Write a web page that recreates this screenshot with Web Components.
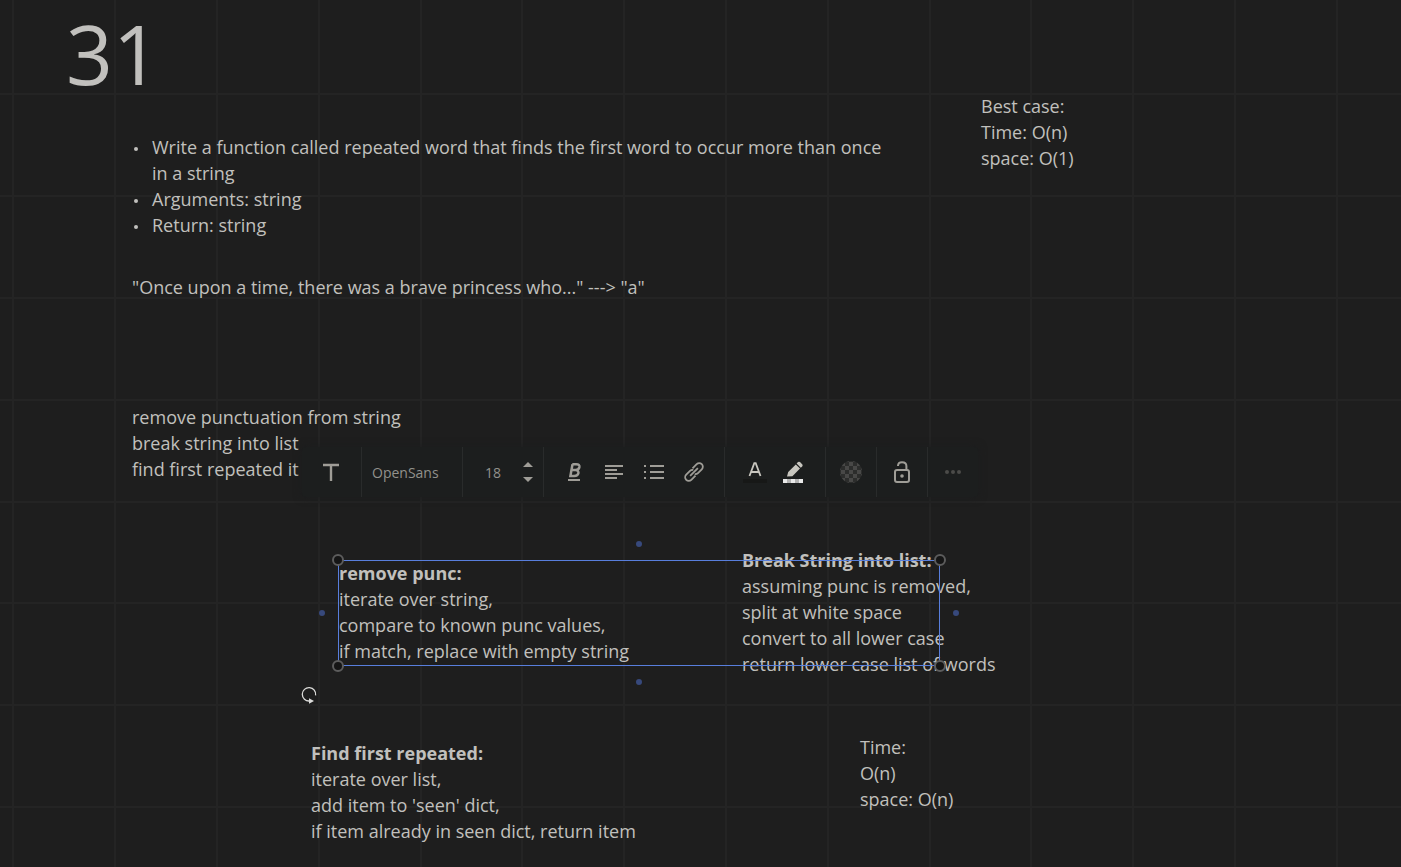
<!DOCTYPE html>
<html lang="en">
<head>
<meta charset="utf-8">
<meta name="viewport" content="width=device-width, initial-scale=1">
<title>Whiteboard 31</title>
<style>
  body { margin: 0; background: #1e1e1e; color: #c1c0bd; font-family: "Open Sans", "Noto Sans", sans-serif; }
  li { display: grid; grid-template-columns: 20px 1fr; }
  li::before { content: ""; width: 4px; height: 4px; margin: 13px 0 0 2px; border-radius: 50%; background: currentColor; }
</style>
</head>
<body>
<white-board>
  <board-note style="--x:66px;--y:10px"><h1>31</h1></board-note>
  <board-note style="--x:132px;--y:134px;--w:764px">
    <ul>
      <li>Write a function called repeated word that finds the first word to occur more than once in a string</li>
      <li>Arguments: string</li>
      <li>Return: string</li>
    </ul>
  </board-note>
  <board-note style="--x:132px;--y:274px"><p>"Once upon a time, there was a brave princess who..." ---&gt; "a"</p></board-note>
  <board-note style="--x:132px;--y:404px"><p>remove punctuation from string</p><p>break string into list</p><p>find first repeated it</p></board-note>
  <board-note style="--x:981px;--y:93px"><p>Best case:</p><p>Time: O(n)</p><p>space: O(1)</p></board-note>
  <board-note style="--x:339px;--y:560px"><h2>remove punc:</h2><p>iterate over string,</p><p>compare to known punc values,</p><p>if match, replace with empty string</p></board-note>
  <board-note style="--x:742px;--y:547px"><h2>Break String into list:</h2><p>assuming punc is removed,</p><p>split at white space</p><p>convert to all lower case</p><p>return lower case list of words</p></board-note>
  <board-note style="--x:311px;--y:740px"><h2>Find first repeated:</h2><p>iterate over list,</p><p>add item to 'seen' dict,</p><p>if item already in seen dict, return item</p></board-note>
  <board-note style="--x:860px;--y:734px"><p>Time:</p><p>O(n)</p><p>space: O(n)</p></board-note>
  <selection-box style="--x:338px;--y:560px;--w:602px;--h:106px"></selection-box>
  <text-toolbar style="--x:302px;--y:447px"></text-toolbar>
</white-board>

<script>
const attach = (el, html) => { el.attachShadow({ mode: "open" }).innerHTML = html; };

customElements.define("white-board", class extends HTMLElement {
  constructor() {
    super();
    attach(this, `
      <style>
        :host { display: block; position: relative; min-height: 100vh; background: #1e1e1e; }
        svg { position: absolute; inset: 0; width: 100%; height: 100%; }
        path { stroke: #242424; stroke-width: 2; fill: none; }
      </style>
      <svg aria-hidden="true"><path></path></svg>
      <slot></slot>`);
    const step = 101.8;
    let d = "";
    for (let i = 0; i < 40; i++) {
      d += `M${Math.round(13.4 + i * step)} 0V4000M0 ${Math.round(94.4 + i * step)}H4000`;
    }
    this.shadowRoot.querySelector("path").setAttribute("d", d);
  }
});

customElements.define("board-note", class extends HTMLElement {
  constructor() {
    super();
    attach(this, `
      <style>
        :host { display: block; position: absolute; left: var(--x); top: var(--y); width: var(--w, max-content); font-size: 18px; line-height: 26px; }
        ::slotted(*) { margin: 0 !important; padding: 0 !important; font-size: inherit; line-height: inherit; }
        ::slotted(h1) { font-size: 82px; line-height: 86px; font-weight: 400; }
        ::slotted(h2) { font-weight: 700; }
      </style>
      <slot></slot>`);
  }
});

customElements.define("selection-box", class extends HTMLElement {
  constructor() {
    super();
    attach(this, `
      <style>
        :host { display: block; position: absolute; left: var(--x); top: var(--y); width: var(--w); height: var(--h); box-shadow: inset 0 0 0 1px #587edc; }
        button { position: absolute; padding: 0; box-sizing: border-box; border-radius: 50%; translate: -50% -50%; }
        .corner { width: 12px; height: 12px; border: 2px solid #5c5c5c; background: #151515; }
        .dot { width: 6px; height: 6px; border: 0; background: #37497c; }
        .n { top: 0; } .s { top: 100%; } .w { left: 0; } .e { left: 100%; }
        .mid-x { left: 50%; } .mid-y { top: 50%; }
        .dot.n { top: -16px; } .dot.s { top: calc(100% + 16px); }
        .dot.w { left: -16px; } .dot.e { left: calc(100% + 16px); }
        .rotate { left: -29px; top: calc(100% + 29px); width: 18px; height: 18px; border: 0; background: none; color: #dcdcda; }
        svg { display: block; }
      </style>
      <button class="corner n w" aria-label="Resize top left"></button>
      <button class="corner n e" aria-label="Resize top right"></button>
      <button class="corner s w" aria-label="Resize bottom left"></button>
      <button class="corner s e" aria-label="Resize bottom right"></button>
      <button class="dot n mid-x" aria-label="Connect top"></button>
      <button class="dot s mid-x" aria-label="Connect bottom"></button>
      <button class="dot w mid-y" aria-label="Connect left"></button>
      <button class="dot e mid-y" aria-label="Connect right"></button>
      <button class="rotate" aria-label="Rotate">
        <svg width="18" height="18" viewBox="0 0 18 18"><path d="M15.6 9.4A6.7 6.7 0 1 0 9.5 15" fill="none" stroke="currentColor" stroke-width="1.3"/><path d="M9 12.2L14 15L9 17.8Z" fill="currentColor"/></svg>
      </button>`);
  }
});

customElements.define("tool-button", class extends HTMLElement {
  constructor() {
    super();
    attach(this, `
      <style>
        :host { display: block; }
        button { display: grid; place-items: center; width: 100%; height: 100%; padding: 0; border: 0; background: none; color: inherit; font: inherit; }
      </style>
      <button aria-label="${this.getAttribute("label")}"><slot></slot></button>`);
  }
});

customElements.define("text-toolbar", class extends HTMLElement {
  constructor() {
    super();
    attach(this, `
      <style>
        :host { display: flex; position: absolute; left: var(--x); top: var(--y); height: 50px; background: #1c1e1e; border-radius: 4px; box-shadow: 0 0 8px #1c1d1e; color: #9f9d97; font-size: 14px; }
        section { display: flex; align-items: stretch; box-sizing: border-box; border-right: 1px solid #292b2b; }
        section:last-child { border: 0; }
        tool-button { width: 40px; }
        .type tool-button { width: 57px; padding-right: 2px; }
        .single tool-button { width: 50px; }
        .format { padding: 0 10px; }
        .colour { padding: 0 13px 0 11px; color: #c8c6bf; }
        .colour tool-button { width: 38px; }
        select, input { appearance: none; margin: 0; border: 0; padding: 0; background: none; color: #92918c; font: inherit; outline: 0; }
        .font select { width: 100px; padding-left: 10px; }
        .size input { width: 50px; padding-left: 22px; box-sizing: border-box; }
        .step { display: flex; flex-direction: column; justify-content: center; width: 30px; }
        .step tool-button { width: 30px; height: 15px; }
        .more { color: #4b4b49; }
        svg { display: block; }
      </style>
      <section class="type"><tool-button label="Text type"><svg width="18" height="18" viewBox="0 0 18 18"><path d="M1 2H17M9 2V18" stroke="currentColor" stroke-width="2.4" fill="none"/></svg></tool-button></section>
      <section class="font"><select aria-label="Font"><option>OpenSans</option></select></section>
      <section class="size"><input aria-label="Font size" value="18">
        <div class="step">
          <tool-button label="Larger"><svg width="10" height="5" viewBox="0 0 10 5"><path d="M0 5L5 0L10 5Z" fill="currentColor"/></svg></tool-button>
          <tool-button label="Smaller"><svg width="10" height="5" viewBox="0 0 10 5"><path d="M0 0L5 5L10 0Z" fill="currentColor"/></svg></tool-button>
        </div></section>
      <section class="format">
        <tool-button label="Bold, italic, underline"><svg width="16" height="20" viewBox="0 0 16 20"><path d="M6.3 2.2H10.3Q13.8 2.2 13.4 5Q12.9 7.9 9.6 8.1H5.4M9.6 8.1Q13 8.7 12.4 11.3Q11.8 14 8.2 14H4.4L6.5 2.2" fill="none" stroke="currentColor" stroke-width="2.5"/><path d="M2 18H14" stroke="currentColor" stroke-width="2"/></svg></tool-button>
        <tool-button label="Align left"><svg width="18" height="16" viewBox="0 0 18 16"><path d="M0 2H18M0 6H12M0 10H18M0 14H12" stroke="currentColor" stroke-width="2"/></svg></tool-button>
        <tool-button label="Bulleted list"><svg width="20" height="16" viewBox="0 0 20 16"><path d="M6 2H20M6 8H20M6 14H20M0 2H2M0 8H2M0 14H2" stroke="currentColor" stroke-width="2"/></svg></tool-button>
        <tool-button label="Link"><svg width="20" height="20" viewBox="0 0 20 20"><g transform="rotate(-45 10 10)" fill="none" stroke="currentColor" stroke-width="1.8"><path d="M8.5 13.6H2.6A3.6 3.6 0 0 1 2.6 6.4H8A3.6 3.6 0 0 1 11 8"/><path d="M11.5 6.4H17.4A3.6 3.6 0 0 1 17.4 13.6H12A3.6 3.6 0 0 1 9 12"/><path d="M4.5 10H15.5"/></g></svg></tool-button>
      </section>
      <section class="colour">
        <tool-button label="Text colour"><svg width="24" height="22" viewBox="0 0 24 22"><path d="M6.5 15L11.3 2.2H12.7L17.5 15M8.2 11H15.8" fill="none" stroke="currentColor" stroke-width="1.8"/><path d="M0 20H24" stroke="#171817" stroke-width="4"/></svg></tool-button>
        <tool-button label="Highlight colour"><svg width="20" height="22" viewBox="0 0 20 22"><path d="M4 15.5L5.2 11L12.8 3.4L17 7.6L9.4 15.2ZM13.6 2.6L15 1.1Q16 .2 17 1.1L19.4 3.5Q20 4.4 19.2 5.4L17.8 6.8Z" fill="currentColor"/><path d="M0 20H20" stroke="#e9e9e9" stroke-width="4"/><path d="M4 20H8M12 20H16" stroke="#b2b2b2" stroke-width="4"/></svg></tool-button>
      </section>
      <section class="single"><tool-button label="Fill"><svg width="22" height="22" viewBox="0 0 22 22"><defs><clipPath id="disc"><circle cx="11" cy="11" r="11"/></clipPath><pattern id="checks" x="1" y="1" width="8" height="8" patternUnits="userSpaceOnUse"><path fill="#2c2d2c" d="M0 0H8V8H0Z"/><path fill="#484847" d="M0 0H4V8H8V4H0Z"/></pattern></defs><path clip-path="url(#disc)" fill="url(#checks)" d="M0 0H22V22H0Z"/></svg></tool-button></section>
      <section class="single"><tool-button label="Lock"><svg width="18" height="22" viewBox="0 0 18 22"><rect x="2" y="9" width="14" height="12" rx="2" fill="none" stroke="currentColor" stroke-width="2"/><path d="M5 5V4.6Q5.2 1.2 9 1.2Q13.4 1.2 13.4 5V9" fill="none" stroke="currentColor" stroke-width="2"/><circle cx="9" cy="15" r="1.8" fill="currentColor"/></svg></tool-button></section>
      <section class="single more"><tool-button label="More"><svg width="16" height="4" viewBox="0 0 16 4"><circle cx="2" cy="2" r="2" fill="currentColor"/><circle cx="8" cy="2" r="2" fill="currentColor"/><circle cx="14" cy="2" r="2" fill="currentColor"/></svg></tool-button></section>`);
  }
});
</script>
</body>
</html>
